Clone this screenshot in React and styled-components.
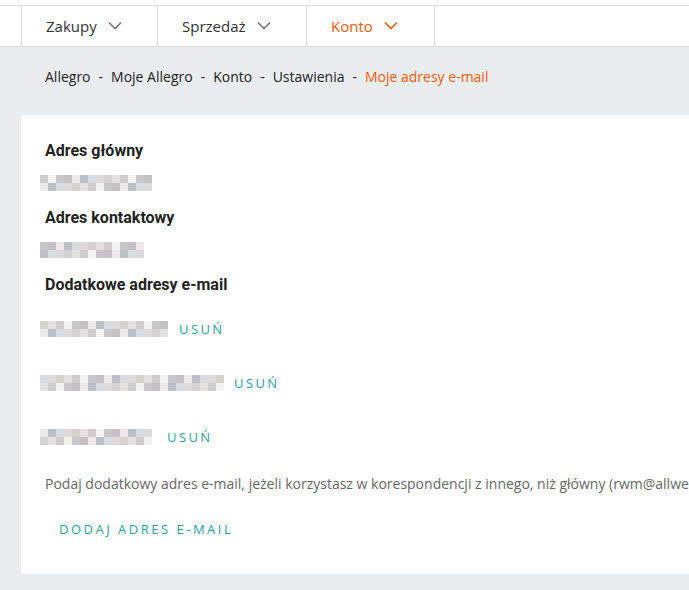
import React from "react";
import styled, { createGlobalStyle } from "styled-components";

const GlobalStyle = createGlobalStyle`
  html, body {
    margin: 0;
    padding: 0;
    background: #e9edf0;
    overflow: hidden;
  }
  body {
    font-family: "Open Sans", sans-serif;
    color: #222;
  }
`;

const Page = styled.div`
  width: 689px;
  height: 590px;
  background: #e9edf0;
  overflow: hidden;
`;

const TopStrip = styled.div`
  height: 5px;
  background: #fff;
`;

const NavBar = styled.nav`
  display: flex;
  height: 40px;
  background: #fff;
  border-top: 1px solid #dcdcdc;
  border-bottom: 1px solid #dcdcdc;
  padding-left: 21px;
`;

const Tab = styled.div`
  box-sizing: border-box;
  display: flex;
  align-items: center;
  gap: 11px;
  width: ${p => p.$w}px;
  padding-left: 24px;
  padding-bottom: 1px;
  border-left: 1px solid #dcdcdc;
  border-right: ${p => (p.$last ? "1px solid #dcdcdc" : "none")};
  font-size: 15px;
  color: ${p => (p.$active ? "#ff5a00" : "#333")};
`;

const Breadcrumb = styled.div`
  box-sizing: border-box;
  display: flex;
  align-items: flex-start;
  height: 68px;
  padding: 20px 0 0 45px;
  font-size: 14px;
  line-height: 19px;
  color: #222;
`;

const Crumb = styled.span`
  color: ${p => (p.$current ? "#ff5a00" : "#222")};
`;

const Sep = styled.span`
  margin: 0 8px;
`;

const Card = styled.div`
  margin-left: 21px;
  background: #fff;
  height: 459px;
  padding: 26px 0 0 24px;
  box-sizing: border-box;
`;

const Heading = styled.h3`
  margin: 0;
  font-family: Roboto, sans-serif;
  font-weight: 700;
  font-size: 16px;
  line-height: 20px;
  color: #222;
`;

const Section = styled.div`
  margin-bottom: ${p => p.$mb}px;
`;

const Masked = styled.div`
  margin: ${p => p.$mt}px 0 0 -5px;
  display: flex;
  align-items: center;
`;

const List = styled.div`
  margin-top: 7px;
`;

const Row = styled.div`
  display: flex;
  align-items: center;
  margin-left: -5px;
  height: 54px;
`;

const Remove = styled.span`
  font-size: 13px;
  letter-spacing: 2.4px;
  color: #1fa3a0;
  margin-left: ${p => p.$gap}px;
`;

const Hint = styled.p`
  margin: 10px 0 0;
  font-size: 14px;
  color: #666;
  white-space: nowrap;
`;

const AddButton = styled.div`
  margin: 27px 0 0 14px;
  font-size: 13px;
  letter-spacing: 2.5px;
  color: #1fa3a0;
`;

const Chevron = ({ color }) => (
  <svg width="14" height="9" viewBox="0 0 14 9">
    <polyline points="1,1.5 7,7.5 13,1.5" fill="none" stroke={color} strokeWidth="1.6" />
  </svg>
);

const shades = ["#ecebea", "#dcdada", "#cfcccd", "#c3c1c3", "#d8dcdf", "#e4e2e0", "#c9c6cb", "#bdbfc6", "#d3d2cf", "#f3f3f2"];

const Mosaic = ({ cols, seed, rows = 2 }) => {
  const cells = [];
  let s = seed;
  for (let r = 0; r < rows; r++) {
    for (let c = 0; c < cols; c++) {
      s = (s * 9301 + 49297) % 233280;
      const col = shades[s % shades.length];
      cells.push(<rect key={r + "-" + c} x={c * 8} y={r * 8} width="8" height="8" fill={col} />);
    }
  }
  return (
    <svg width={cols * 8} height={rows * 8} style={{ display: "block" }}>
      {cells}
    </svg>
  );
};

const tabs = [
  { label: "Zakupy", w: 136 },
  { label: "Sprzedaż", w: 149 },
  { label: "Konto", w: 129, active: true, last: true },
];

const crumbs = ["Allegro", "Moje Allegro", "Konto", "Ustawienia"];

const extra = [
  { cols: 16, seed: 11, gap: 11 },
  { cols: 23, seed: 37, gap: 10 },
  { cols: 14, seed: 73, gap: 15 },
];

export default function App() {
  return (
    <Page>
      <GlobalStyle />
      <TopStrip />
      <NavBar>
        {tabs.map(t => (
          <Tab key={t.label} $w={t.w} $active={t.active} $last={t.last}>
            {t.label}
            <Chevron color={t.active ? "#ff5a00" : "#767676"} />
          </Tab>
        ))}
      </NavBar>
      <Breadcrumb>
        {crumbs.map(c => (
          <React.Fragment key={c}>
            <Crumb>{c}</Crumb>
            <Sep>-</Sep>
          </React.Fragment>
        ))}
        <Crumb $current>Moje adresy e-mail</Crumb>
      </Breadcrumb>
      <Card>
        <Section $mb={17}>
          <Heading>Adres główny</Heading>
          <Masked $mt={14}>
            <Mosaic cols={14} seed={5} />
          </Masked>
        </Section>
        <Section $mb={17}>
          <Heading>Adres kontaktowy</Heading>
          <Masked $mt={14}>
            <Mosaic cols={13} seed={19} />
          </Masked>
        </Section>
        <Heading>Dodatkowe adresy e-mail</Heading>
        <List>
          {extra.map((e, i) => (
            <Row key={i}>
              <Mosaic cols={e.cols} seed={e.seed} />
              <Remove $gap={e.gap}>USUŃ</Remove>
            </Row>
          ))}
        </List>
        <Hint>
          Podaj dodatkowy adres e-mail, jeżeli korzystasz w korespondencji z innego, niż główny (rwm@allwebmedia.pl)
        </Hint>
        <AddButton>DODAJ ADRES E-MAIL</AddButton>
      </Card>
    </Page>
  );
}
